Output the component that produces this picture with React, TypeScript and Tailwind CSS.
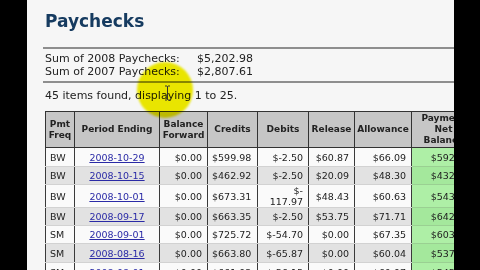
const ROWS = [
  { freq: 'BW', date: '2008-10-29', bal: '$0.00', credits: '$599.98', debits: '$-2.50', release: '$60.87', allow: '$66.09', net: '$592.38', h: 'h-[19px]' },
  { freq: 'BW', date: '2008-10-15', bal: '$0.00', credits: '$462.92', debits: '$-2.50', release: '$20.09', allow: '$48.30', net: '$432.21', h: 'h-[18px]' },
  { freq: 'BW', date: '2008-10-01', bal: '$0.00', credits: '$673.31', debits: '$-117.97', release: '$48.43', allow: '$60.63', net: '$543.14', h: 'h-[22px]' },
  { freq: 'BW', date: '2008-09-17', bal: '$0.00', credits: '$663.35', debits: '$-2.50', release: '$53.75', allow: '$71.71', net: '$642.89', h: 'h-[18px]' },
  { freq: 'SM', date: '2008-09-01', bal: '$0.00', credits: '$725.72', debits: '$-54.70', release: '$0.00', allow: '$67.35', net: '$603.67', h: 'h-[18px]' },
  { freq: 'SM', date: '2008-08-16', bal: '$0.00', credits: '$663.80', debits: '$-65.87', release: '$0.00', allow: '$60.04', net: '$537.89', h: 'h-[19px]' },
  { freq: 'SM', date: '2008-08-01', bal: '$0.00', credits: '$661.93', debits: '$-56.15', release: '$0.00', allow: '$60.97', net: '$545.81', h: 'h-[19px]' },
]

export default function App() {
  return (
    <div className="relative flex h-[270px] w-[480px] overflow-hidden bg-black font-['DejaVu_Sans',Verdana,sans-serif] text-[#222]">
      <div className="w-[27px] shrink-0" />

      {/* page panel */}
      <div className="h-full w-[427px] shrink-0 overflow-hidden bg-[#f6f6f6]">
        <div className="w-[470px] pl-[16px]">
          <h1 className="pl-[2px] pt-[11px] text-[17px] font-bold leading-[20px] text-[#163b60]">Paychecks</h1>

          <div className="mt-[16px] grid grid-cols-[152px_auto] border-y-2 border-[#8e8e8e] py-[2.5px] pl-[2px] text-[11px] leading-[13.5px]">
            <span>Sum of 2008 Paychecks:</span>
            <span>$5,202.98</span>
            <span>Sum of 2007 Paychecks:</span>
            <span>$2,807.61</span>
          </div>

          <p className="pl-[2px] pt-[5.5px] text-[11px] leading-[13.5px]">45 items found, displaying 1 to 25.</p>

          <table className="ml-[2px] mt-[9px] w-[430px] table-fixed border-collapse border border-[#333] text-[9.5px]">
            <colgroup>
              <col className="w-[29px]" />
              <col className="w-[85px]" />
              <col className="w-[48px]" />
              <col className="w-[50px]" />
              <col className="w-[51px]" />
              <col className="w-[46px]" />
              <col className="w-[57px]" />
              <col className="w-[64px]" />
            </colgroup>
            <thead>
              <tr className="h-[36px] bg-[#c6c6c6] text-[9px] leading-[11px]">
                <th className="border border-[#333] px-0 text-center font-bold">Pmt<br />Freq</th>
                <th className="border border-[#333] text-center font-bold">Period Ending</th>
                <th className="border border-[#333] text-center font-bold">Balance<br />Forward</th>
                <th className="border border-[#333] text-center font-bold">Credits</th>
                <th className="border border-[#333] text-center font-bold">Debits</th>
                <th className="border border-[#333] text-center font-bold">Release</th>
                <th className="border border-[#333] text-center font-bold">Allowance</th>
                <th className="border border-[#333] text-center font-bold">Payment<br />Net<br />Balance</th>
              </tr>
            </thead>
            <tbody className="leading-[11px]">
              {ROWS.map((r, i) => {
                const alt = i % 2 === 1
                const cell = `border-x border-b border-x-[#3a3a3a] border-b-[#d2d2d2] ${alt ? 'bg-[#e2e2e2]' : 'bg-[#fafafa]'}`
                return (
                  <tr key={r.date} className={r.h}>
                    <td className={`${cell} pl-[4px] text-left`}>{r.freq}</td>
                    <td className={`${cell} text-center`}>
                      <span className="text-[#2a2aa6] underline">{r.date}</span>
                    </td>
                    <td className={`${cell} pr-[5px] text-right`}>{r.bal}</td>
                    <td className={`${cell} pl-[4px] text-left`}>{r.credits}</td>
                    <td className={`${cell} pr-[5px] text-right`}>
                      {r.debits === '$-117.97' ? (<>$-<br />117.97</>) : r.debits}
                    </td>
                    <td className={`${cell} pr-[5px] text-right`}>{r.release}</td>
                    <td className={`${cell} pr-[5px] text-right`}>{r.allow}</td>
                    <td className={`border-x border-b border-x-[#3a3a3a] border-b-[#9ad092] pr-[5px] text-right ${alt ? 'bg-[#a4e89c]' : 'bg-[#aeefa6]'}`}>{r.net}</td>
                  </tr>
                )
              })}
            </tbody>
          </table>
        </div>
      </div>

      <div className="flex-1" />

      {/* cursor highlight */}
      <div className="pointer-events-none absolute left-[137px] top-[62px] h-[56px] w-[56px] rounded-full bg-[#f2ee00] mix-blend-multiply blur-[1px]" />
      <svg className="absolute left-[164px] top-[85px]" width="7" height="16" viewBox="0 0 7 16" fill="none">
        <path d="M1 1h2l0.5 0.5L4 1h2M3.5 1.5v13M1 15h2l0.5-0.5L4 15h2" stroke="#333" strokeWidth="1" />
      </svg>
    </div>
  )
}
